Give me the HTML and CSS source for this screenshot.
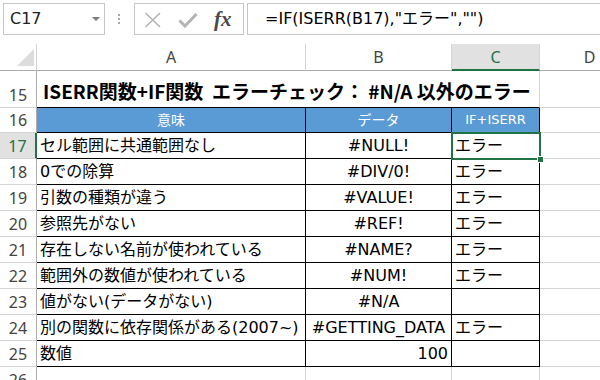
FILE: index.html
```html
<!DOCTYPE html>
<html lang="ja">
<head>
<meta charset="utf-8">
<title>ISERR関数+IF関数</title>
<link rel="stylesheet" href="styles.css">
</head>
<body>
<div class="fbar">
  <div class="namebox"><span class="ref">C17</span><span class="dd"></span></div>
  <div class="dots"><i></i><i></i><i></i></div>
  <div class="btns">
    <svg class="ico-x" width="18" height="16" viewBox="0 0 18 16"><path d="M1.5 1 L16 15 M16 1 L1.5 15" stroke="#b4b4b4" stroke-width="1.6" fill="none"/></svg>
    <svg class="ico-ok" width="20" height="16" viewBox="0 0 20 16"><path d="M1.5 8.5 L7 14 L18.5 2" stroke="#b4b4b4" stroke-width="3" fill="none"/></svg>
    <span class="fx">fx</span>
  </div>
  <div class="formula">=IF(ISERR(B17),"エラー","")</div>
</div>
<table class="sheet">
  <colgroup><col class="c-rh"><col class="c-a"><col class="c-b"><col class="c-c"><col class="c-d"></colgroup>
  <thead>
    <tr class="colhead">
      <th class="corner"><svg width="37" height="26" viewBox="0 0 37 26"><polygon points="17,22 34,22 34,5" fill="#dcdcdc"/></svg></th>
      <th>A</th><th>B</th><th class="sel">C</th><th>D</th>
    </tr>
  </thead>
  <tbody>
    <tr class="r15">
      <th class="rh">15</th>
      <td colspan="3" class="title">ISERR関数+IF関数&nbsp;&nbsp;エラーチェック： #N/A 以外のエラー</td>
      <td class="g"></td>
    </tr>
    <tr class="r">
      <th class="rh">16</th>
      <td class="t hd">意味</td><td class="t hd">データ</td><td class="t hd sm">IF+ISERR</td><td class="g"></td>
    </tr>
    <tr class="r">
      <th class="rh sel">17</th>
      <td class="t">セル範囲に共通範囲なし</td><td class="t ctr">#NULL!</td><td class="t csel">エラー</td><td class="g"></td>
    </tr>
    <tr class="r">
      <th class="rh">18</th>
      <td class="t">0での除算</td><td class="t ctr">#DIV/0!</td><td class="t">エラー</td><td class="g"></td>
    </tr>
    <tr class="r">
      <th class="rh">19</th>
      <td class="t">引数の種類が違う</td><td class="t ctr">#VALUE!</td><td class="t">エラー</td><td class="g"></td>
    </tr>
    <tr class="r">
      <th class="rh">20</th>
      <td class="t">参照先がない</td><td class="t ctr">#REF!</td><td class="t">エラー</td><td class="g"></td>
    </tr>
    <tr class="r">
      <th class="rh">21</th>
      <td class="t">存在しない名前が使われている</td><td class="t ctr">#NAME?</td><td class="t">エラー</td><td class="g"></td>
    </tr>
    <tr class="r">
      <th class="rh">22</th>
      <td class="t">範囲外の数値が使われている</td><td class="t ctr">#NUM!</td><td class="t">エラー</td><td class="g"></td>
    </tr>
    <tr class="r">
      <th class="rh">23</th>
      <td class="t">値がない(データがない)</td><td class="t ctr">#N/A</td><td class="t"></td><td class="g"></td>
    </tr>
    <tr class="r">
      <th class="rh">24</th>
      <td class="t">別の関数に依存関係がある(2007~)</td><td class="t ctr">#GETTING_DATA</td><td class="t">エラー</td><td class="g"></td>
    </tr>
    <tr class="r">
      <th class="rh">25</th>
      <td class="t">数値</td><td class="t num">100</td><td class="t"></td><td class="g"></td>
    </tr>
    <tr class="r">
      <th class="rh">26</th>
      <td class="g"></td><td class="g"></td><td class="g"></td><td class="g"></td>
    </tr>
  </tbody>
</table>
</body>
</html>
```
FILE: styles.css
```css
html, body {
  margin: 0;
  padding: 0;
  width: 600px;
  height: 380px;
  overflow: hidden;
  background: #fff;
}
body {
  font-family: "DejaVu Sans", "Noto Sans CJK JP", sans-serif;
  font-size: 16px;
  color: #000;
}

/* formula bar */
.fbar {
  display: flex;
  align-items: flex-start;
  height: 44px;
  padding-top: 3px;
  box-sizing: border-box;
}
.fbar > * { flex: none; }
.namebox {
  margin-left: 3px;
  width: 102px;
  height: 32px;
  border: 1px solid #c6c6c6;
  box-sizing: border-box;
  display: flex;
  align-items: center;
  padding: 0 4px 0 6px;
  color: #222;
}
.namebox .ref { line-height: 20px; }
.dd {
  margin-left: auto;
  width: 0;
  height: 0;
  border-left: 4px solid transparent;
  border-right: 4px solid transparent;
  border-top: 4px solid #7a7a7a;
}
.dots {
  margin-left: 13px;
  margin-top: 11px;
  display: flex;
  flex-direction: column;
  gap: 2px;
}
.dots i {
  display: block;
  width: 2px;
  height: 2px;
  background: #a8a8a8;
}
.btns {
  margin-left: 14px;
  width: 110px;
  height: 32px;
  border: 1px solid #c6c6c6;
  box-sizing: border-box;
  display: flex;
  align-items: center;
  padding-left: 9px;
}
.ico-x { margin-top: 1px; }
.ico-ok { margin-left: 16px; margin-top: 1px; }
.fx {
  margin-left: 16px;
  font-family: "Liberation Serif", serif;
  font-style: italic;
  font-weight: bold;
  font-size: 21px;
  color: #4a4a4a;
  line-height: 24px;
}
.formula {
  margin-left: 3px;
  width: 420px;
  height: 32px;
  border: 1px solid #c6c6c6;
  box-sizing: border-box;
  padding-left: 17px;
  line-height: 30px;
  white-space: nowrap;
}

/* sheet */
.sheet {
  border-collapse: separate;
  border-spacing: 0;
  table-layout: fixed;
  width: 640px;
}
.c-rh { width: 37px; }
.c-a { width: 269px; }
.c-b { width: 146px; }
.c-c { width: 88px; }
.c-d { width: 100px; }

.sheet th, .sheet td {
  padding: 0;
  box-sizing: border-box;
  white-space: nowrap;
  font-weight: normal;
  border-right: 1px solid #d4d4d4;
  border-bottom: 1px solid #d4d4d4;
  vertical-align: middle;
  line-height: 20px;
}

.colhead th {
  height: 27px;
  font-family: "Noto Sans", sans-serif;
  color: #444;
  text-align: center;
  border-bottom-color: #ababab;
}
.colhead th.corner { padding-top: 0; vertical-align: top; }
.colhead th.corner svg { display: block; }
.colhead th.sel {
  background: #e1e1e1;
  color: #217346;
  border-bottom: 2px solid #217346;
}

.r15 th, .r15 td { height: 37px; }
.r th, .r td { height: 26px; }
.r:nth-child(2) th, .r:nth-child(2) td { height: 25px; }

.rh {
  font-family: "Noto Sans", sans-serif;
  color: #444;
  text-align: center;
  vertical-align: bottom !important;
  padding-bottom: 2px !important;
  border-right-color: #ababab !important;
}
.rh.sel {
  background: #e1e1e1;
  color: #217346;
  border-right: 2px solid #217346 !important;
}

.title {
  font-family: "Noto Sans CJK JP", sans-serif;
  font-weight: bold !important;
  font-size: 19px;
  padding-left: 6px !important;
  padding-top: 3px !important;
  border-bottom-color: #000 !important;
}

.t {
  border-right-color: #000 !important;
  border-bottom-color: #000 !important;
  padding-left: 3px !important;
  padding-right: 3px !important;
}
.hd {
  background: #5b9bd5;
  color: #fff;
  text-align: center;
  font-size: 14px;
}
.hd.sm { font-size: 13px; }
.ctr { text-align: center; }
.num { text-align: right; }

.csel { position: relative; }
.csel::before {
  content: "";
  position: absolute;
  left: -1px;
  top: -1px;
  right: -2px;
  bottom: -2px;
  border: 2px solid #217346;
}
.csel::after {
  content: "";
  position: absolute;
  right: -5px;
  bottom: -5px;
  width: 7px;
  height: 7px;
  box-sizing: border-box;
  background: #217346;
  border: 1px solid #fff;
}
```
